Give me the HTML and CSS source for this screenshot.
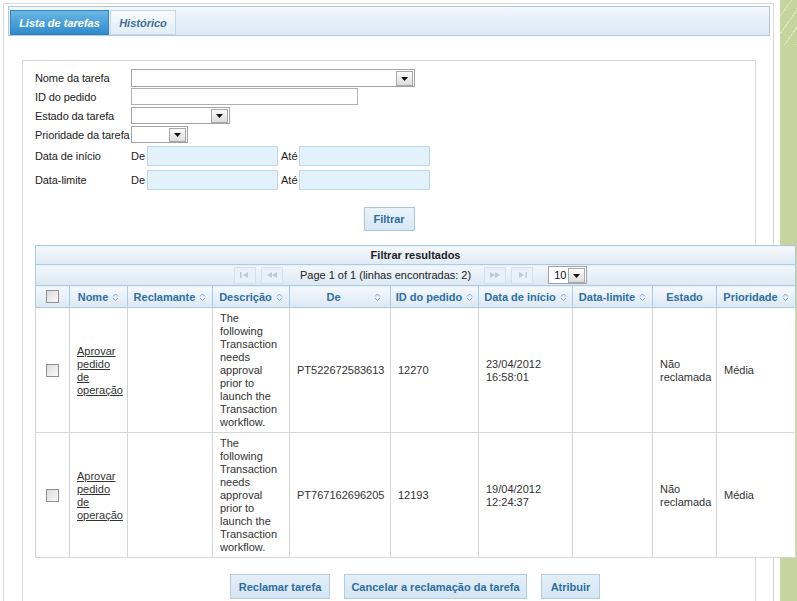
FILE: index.html
```html
<!DOCTYPE html>
<html lang="pt">
<head>
<meta charset="utf-8">
<title>Lista de tarefas</title>
<link rel="stylesheet" href="styles.css">
</head>
<body>
<div class="frame">
  <div class="tabbar">
    <div class="tab active">Lista de tarefas</div>
    <div class="tab inactive">Histórico</div>
  </div>
  <div class="panel">
    <div class="form">
      <div class="frow h18 mb1">
        <span class="lbl">Nome da tarefa</span>
        <div class="sel w-nome"><span class="arr"><svg viewBox="0 0 7 4" width="7" height="4"><polygon points="0,0 7,0 3.5,4"/></svg></span></div>
      </div>
      <div class="frow h17 mb2">
        <span class="lbl">ID do pedido</span>
        <div class="inp w-id"></div>
      </div>
      <div class="frow h17 mb2">
        <span class="lbl">Estado da tarefa</span>
        <div class="sel w-estado"><span class="arr"><svg viewBox="0 0 7 4" width="7" height="4"><polygon points="0,0 7,0 3.5,4"/></svg></span></div>
      </div>
      <div class="frow h17 mb3">
        <span class="lbl">Prioridade da tarefa</span>
        <div class="sel w-prio"><span class="arr"><svg viewBox="0 0 7 4" width="7" height="4"><polygon points="0,0 7,0 3.5,4"/></svg></span></div>
      </div>
      <div class="frow h20 mb4">
        <span class="lbl">Data de início</span>
        <span class="de">De</span><div class="date"></div>
        <span class="ate">Até</span><div class="date"></div>
      </div>
      <div class="frow h20">
        <span class="lbl">Data-limite</span>
        <span class="de">De</span><div class="date"></div>
        <span class="ate">Até</span><div class="date"></div>
      </div>
    </div>
    <div class="filter-row"><button class="btn filtrar">Filtrar</button></div>

    <table class="grid">
      <colgroup>
        <col class="c-cb"><col class="c-nome"><col class="c-recl"><col class="c-desc"><col class="c-de">
        <col class="c-id"><col class="c-ini"><col class="c-lim"><col class="c-est"><col class="c-prio">
      </colgroup>
      <thead>
        <tr class="cap"><th colspan="10">Filtrar resultados</th></tr>
        <tr class="pager"><th colspan="10">
          <div class="pg">
            <span class="pbtn"><svg viewBox="0 0 9 6" width="9" height="6"><rect x="0" y="0" width="1.5" height="6"/><polygon points="8,0 8,6 3,3"/></svg></span>
            <span class="pbtn"><svg viewBox="0 0 10 6" width="10" height="6"><polygon points="5,0 5,6 0,3"/><polygon points="10,0 10,6 5,3"/></svg></span>
            <span class="ptext">Page 1 of 1 (linhas encontradas: 2)</span>
            <span class="pbtn"><svg viewBox="0 0 10 6" width="10" height="6"><polygon points="0,0 0,6 5,3"/><polygon points="5,0 5,6 10,3"/></svg></span>
            <span class="pbtn"><svg viewBox="0 0 9 6" width="9" height="6"><polygon points="1,0 1,6 6,3"/><rect x="7.5" y="0" width="1.5" height="6"/></svg></span>
            <div class="sel psel"><span class="pval">10</span><span class="arr"><svg viewBox="0 0 7 4" width="7" height="4"><polygon points="0,0 7,0 3.5,4"/></svg></span></div>
          </div>
        </th></tr>
        <tr class="hdr">
          <th><span class="cb"></span></th>
          <th>Nome <svg class="si" viewBox="0 0 7 10" width="7" height="10"><path d="M1 4.5 3.5 2 6 4.5M1 6 3.5 8.5 6 6"/></svg></th>
          <th>Reclamante <svg class="si" viewBox="0 0 7 10" width="7" height="10"><path d="M1 4.5 3.5 2 6 4.5M1 6 3.5 8.5 6 6"/></svg></th>
          <th>Descrição <svg class="si" viewBox="0 0 7 10" width="7" height="10"><path d="M1 4.5 3.5 2 6 4.5M1 6 3.5 8.5 6 6"/></svg></th>
          <th><div class="dehead"><span class="det">De</span><svg class="si" viewBox="0 0 7 10" width="7" height="10"><path d="M1 4.5 3.5 2 6 4.5M1 6 3.5 8.5 6 6"/></svg></div></th>
          <th>ID do pedido <svg class="si" viewBox="0 0 7 10" width="7" height="10"><path d="M1 4.5 3.5 2 6 4.5M1 6 3.5 8.5 6 6"/></svg></th>
          <th>Data de início <svg class="si" viewBox="0 0 7 10" width="7" height="10"><path d="M1 4.5 3.5 2 6 4.5M1 6 3.5 8.5 6 6"/></svg></th>
          <th>Data-limite <svg class="si" viewBox="0 0 7 10" width="7" height="10"><path d="M1 4.5 3.5 2 6 4.5M1 6 3.5 8.5 6 6"/></svg></th>
          <th>Estado</th>
          <th>Prioridade <svg class="si" viewBox="0 0 7 10" width="7" height="10"><path d="M1 4.5 3.5 2 6 4.5M1 6 3.5 8.5 6 6"/></svg></th>
        </tr>
      </thead>
      <tbody>
        <tr>
          <td class="cbc"><span class="cb"></span></td>
          <td><a href="#">Aprovar pedido de operação</a></td>
          <td></td>
          <td>The following Transaction needs approval prior to launch the Transaction workflow.</td>
          <td>PT522672583613</td>
          <td>12270</td>
          <td>23/04/2012 16:58:01</td>
          <td></td>
          <td>Não reclamada</td>
          <td>Média</td>
        </tr>
        <tr>
          <td class="cbc"><span class="cb"></span></td>
          <td><a href="#">Aprovar pedido de operação</a></td>
          <td></td>
          <td>The following Transaction needs approval prior to launch the Transaction workflow.</td>
          <td>PT767162696205</td>
          <td>12193</td>
          <td>19/04/2012 12:24:37</td>
          <td></td>
          <td>Não reclamada</td>
          <td>Média</td>
        </tr>
      </tbody>
    </table>

    <div class="actions">
      <button class="btn act b-recl">Reclamar tarefa</button>
      <button class="btn act b-canc">Cancelar a reclamação da tarefa</button>
      <button class="btn act b-atr">Atribuir</button>
    </div>
  </div>
</div>
</body>
</html>
```
FILE: styles.css
```css
html, body {
  margin: 0;
  padding: 0;
}
html {
  height: 601px;
  overflow: hidden;
}
body {
  height: 601px;
  overflow: hidden;
  font-family: "Liberation Sans", Arial, sans-serif;
  font-size: 11px;
  color: #222;
  background:
    repeating-linear-gradient(125deg, rgba(255,255,255,0) 0 9px, rgba(255,255,255,0.45) 9px 10px) right top / 17px 45px no-repeat,
    linear-gradient(to right, #fff 780px, #c4d59e 780px);
}

.frame {
  box-sizing: border-box;
  margin: 3px 0 0 3px;
  width: 771px;
  height: 598px;
  border: 1px solid #d8d8d8;
  border-bottom: none;
}

.tabbar {
  margin: 2px 3px 0 4px;
  height: 28px;
  border: 1px solid #b5c9da;
  background: linear-gradient(#f2f8fd, #dae8f4);
  display: flex;
  align-items: flex-end;
  gap: 1px;
  padding-left: 1px;
}
.tab {
  box-sizing: border-box;
  height: 25px;
  display: flex;
  align-items: center;
  justify-content: center;
  font-weight: bold;
  font-style: italic;
}
.tab.active {
  width: 99px;
  background: linear-gradient(#6ab7e6, #2f8bcb);
  border: 1px solid #3583bd;
  color: #fff;
}
.tab.inactive {
  width: 66px;
  background: linear-gradient(#f8fbfe, #e1edf7);
  border: 1px solid #c3d6e6;
  color: #3d6e98;
}

.panel {
  box-sizing: border-box;
  margin: 24px 17px 0 18px;
  height: 541px;
  border: 1px solid #dadada;
  border-bottom: none;
  padding: 8px 12px 0;
}

.frow {
  display: flex;
  align-items: center;
}
.h18 { height: 18px; }
.h17 { height: 17px; }
.h20 { height: 20px; }
.mb1 { margin-bottom: 1px; }
.mb2 { margin-bottom: 2px; }
.mb3 { margin-bottom: 3px; }
.mb4 { margin-bottom: 4px; }

.lbl {
  width: 96px;
  flex: none;
  white-space: nowrap;
  color: #222;
  letter-spacing: -0.1px;
}
.sel, .inp {
  box-sizing: border-box;
  height: 100%;
  border: 1px solid #a3a3a3;
  background: #fff;
  display: flex;
  align-items: center;
  justify-content: flex-end;
  padding-right: 1px;
}
.w-nome { width: 284px; }
.w-id { width: 227px; border-color: #b0b0b0; }
.w-estado { width: 99px; }
.w-prio { width: 57px; }
.arr {
  box-sizing: border-box;
  width: 17px;
  height: 15px;
  border: 1px solid #a9a9a9;
  background: linear-gradient(#fbfbfb, #dcdcdc);
  display: flex;
  align-items: center;
  justify-content: center;
  padding-top: 1px;
}
.h17 .arr { height: 14px; }
.arr svg { fill: #111; display: block; }

.de { width: 16px; flex: none; }
.ate { width: 18px; flex: none; padding-left: 3px; }
.date {
  box-sizing: border-box;
  width: 131px;
  height: 20px;
  background: #e3f1fb;
  border: 1px solid #bcd8ee;
}

.filter-row {
  display: flex;
  justify-content: center;
  margin-top: 17px;
}
.btn {
  box-sizing: border-box;
  font-family: "Liberation Sans", Arial, sans-serif;
  font-size: 11px;
  font-weight: bold;
  color: #2d6e9e;
  border: 1px solid #aac7df;
  background: linear-gradient(#eaf3fb, #d7e7f4);
  padding: 0;
  margin: 0;
  white-space: nowrap;
}
.filtrar {
  height: 24px;
  width: 51px;
}

.grid {
  margin-top: 14px;
  width: 760px;
  table-layout: fixed;
  border-collapse: collapse;
  background: #fff;
}
.c-cb { width: 34px; }
.c-nome { width: 58px; }
.c-recl { width: 85px; }
.c-desc { width: 77px; }
.c-de { width: 101px; }
.c-id { width: 88px; }
.c-ini { width: 94px; }
.c-lim { width: 80px; }
.c-est { width: 64px; }
.c-prio { width: 79px; }

.grid th {
  border: 1px solid #a9cbe3;
  padding: 0;
  font-weight: bold;
  white-space: nowrap;
}
.cap th {
  height: 18px;
  background: linear-gradient(#f3f8fc, #dfeaf5);
  color: #222;
}
.pager th {
  height: 20px;
  background: linear-gradient(#f1f7fc, #dce8f3);
}
.pg {
  display: flex;
  align-items: center;
  justify-content: center;
  padding-right: 10px;
}
.pbtn {
  box-sizing: border-box;
  width: 22px;
  height: 17px;
  border: 1px solid #d2e1ee;
  background: #e9f1f8;
  display: flex;
  align-items: center;
  justify-content: center;
  margin-right: 5px;
}
.pbtn svg { fill: #b9cada; display: block; }
.ptext {
  font-weight: normal;
  color: #222;
  margin: 0 13px 0 12px;
}
.psel {
  width: 39px;
  height: 18px;
  margin-left: 10px;
  justify-content: space-between;
  font-weight: normal;
  color: #111;
}
.pval { padding-left: 5px; }

.hdr th {
  height: 21px;
  background: linear-gradient(#f4f9fd, #dbe8f4);
  color: #2f6fa0;
}
.si {
  fill: none;
  stroke: #7ca4c7;
  stroke-width: 1;
  vertical-align: -1px;
  margin-left: 1px;
}
.dehead {
  display: flex;
  align-items: center;
  padding-right: 9px;
}
.det { flex: 1; text-align: center; padding-left: 4px; }

.cb {
  display: inline-block;
  box-sizing: border-box;
  width: 13px;
  height: 13px;
  border: 1px solid #8e8f8f;
  background: linear-gradient(135deg, #dcdcdc, #fafafa);
  vertical-align: middle;
}

.grid td {
  border: 1px solid #d6d6d6;
  padding: 4px 7px 3px 7px;
  line-height: 13px;
  vertical-align: middle;
  color: #333;
}
.grid td.cbc {
  text-align: center;
  padding: 0;
}
.grid td a {
  color: #333;
  text-decoration: underline;
}

.actions {
  width: 760px;
  display: flex;
  justify-content: center;
  gap: 14px;
  margin-top: 16px;
}
.act {
  height: 25px;
  background: linear-gradient(#e4eff8, #d4e5f3);
  border-color: #b2cde3;
}
.b-recl { width: 100px; }
.b-canc { width: 183px; }
.b-atr { width: 59px; }
```
